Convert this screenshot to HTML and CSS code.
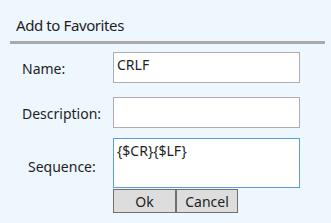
FILE: index.html
```html
<!DOCTYPE html>
<html lang="en">
<head>
    <meta charset="UTF-8">
    <meta name="viewport" content="width=device-width, initial-scale=1.0">
    <title>Add to Favorites</title>
    <link rel="stylesheet" href="styles.css">
</head>
<body>
    <div class="dialog">
        <h1 class="dialog-title">Add to Favorites</h1>

        <form class="fav-form">
            <label class="field-label" for="fav-name">Name:</label>
            <input class="text-box" id="fav-name" type="text" value="CRLF">

            <label class="field-label" for="fav-desc">Description:</label>
            <input class="text-box" id="fav-desc" type="text" value="">

            <label class="field-label field-label--seq" for="fav-seq">Sequence:</label>
            <textarea class="text-box text-box--seq" id="fav-seq">{$CR}{$LF}</textarea>

            <div class="actions">
                <button type="button" class="btn btn-ok">Ok</button>
                <button type="button" class="btn">Cancel</button>
            </div>
        </form>
    </div>
</body>
</html>
```

FILE: styles.css
```css
* {
    margin: 0;
    padding: 0;
    box-sizing: border-box;
}

body {
    font-family: 'Noto Sans', 'Open Sans', sans-serif;
    background-color: #eef6fe;
    color: #1e1e1e;
    width: 331px;
    height: 223px;
    overflow: hidden;
}

.dialog-title {
    font-size: 15px;
    font-weight: normal;
    letter-spacing: -0.4px;
    line-height: 20px;
    margin: 15px 6px 0 10px;
    padding: 0 0 6px 6px;
    border-bottom: 3px solid #aaaaaa;
}

.fav-form {
    display: grid;
    grid-template-columns: 91px 187px;
    row-gap: 14px;
    padding: 8px 0 0 22px;
}

.field-label {
    font-size: 14px;
    align-self: center;
    padding-top: 1px;
}

.field-label--seq {
    padding: 2px 0 0 6px;
}

.text-box {
    font-family: inherit;
    font-size: 14px;
    color: #1e1e1e;
    height: 31px;
    padding: 2px 3px 8px;
    border: 1px solid #abadb3;
    background: white;
    outline: none;
}

.text-box--seq {
    height: 50px;
    margin-top: -4px;
    resize: none;
    border-color: #569de5;
    line-height: 19px;
}

.actions {
    grid-column: 2;
    display: flex;
    margin-top: -13px;
}

.btn {
    font-family: inherit;
    font-size: 14px;
    color: #1e1e1e;
    height: 24px;
    width: 62px;
    background: #dddddd;
    border: 1px solid #707070;
}

.btn-ok {
    width: 63px;
}
```
